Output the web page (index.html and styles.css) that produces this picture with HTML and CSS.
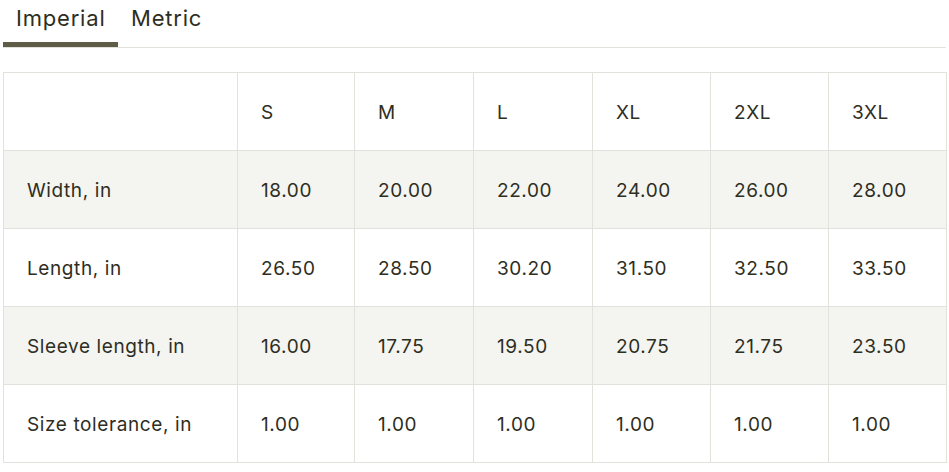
FILE: index.html
```html
<!DOCTYPE html>
<html>
<head>
<meta charset="utf-8">
<link rel="stylesheet" href="styles.css">
</head>
<body>
<div class="tabs">
  <div class="tab active">Imperial</div>
  <div class="tab">Metric</div>
</div>
<table class="sizes">
  <colgroup>
    <col class="c0"><col class="c1"><col class="c2"><col class="c3"><col class="c4"><col class="c5"><col class="c6">
  </colgroup>
  <tr><td></td><td>S</td><td>M</td><td>L</td><td>XL</td><td>2XL</td><td>3XL</td></tr>
  <tr class="alt"><td>Width, in</td><td>18.00</td><td>20.00</td><td>22.00</td><td>24.00</td><td>26.00</td><td>28.00</td></tr>
  <tr><td>Length, in</td><td>26.50</td><td>28.50</td><td>30.20</td><td>31.50</td><td>32.50</td><td>33.50</td></tr>
  <tr class="alt"><td>Sleeve length, in</td><td>16.00</td><td>17.75</td><td>19.50</td><td>20.75</td><td>21.75</td><td>23.50</td></tr>
  <tr><td>Size tolerance, in</td><td>1.00</td><td>1.00</td><td>1.00</td><td>1.00</td><td>1.00</td><td>1.00</td></tr>
</table>
</body>
</html>
```
FILE: styles.css
```css
html, body { margin: 0; padding: 0; background: #fff; }
body {
  font-family: "Inter", "Liberation Sans", sans-serif;
  color: #2e2e1f;
  padding: 0 3px;
}
.tabs {
  display: flex;
  border-bottom: 1px solid #e2e2dd;
  height: 47px;
}
.tab {
  font-size: 22px;
  letter-spacing: 0.8px;
  padding: 5px 13px 0 13px;
  line-height: 27px;
  box-sizing: border-box;
}
.tab.active {
  border-bottom: 5px solid #5f5d48;
  width: 115px;
}
.sizes {
  margin-top: 24px;
  border-collapse: collapse;
  table-layout: fixed;
  width: 943px;
  font-size: 19px;
  letter-spacing: 0.6px;
}
.sizes td {
  border: 1px solid #e2e2dd;
  height: 78px;
  padding: 2px 0 0 23px;
  box-sizing: border-box;
}
.sizes tr.alt td { background: #f4f4f0; }
.c0 { width: 234px; }
.c1 { width: 117px; }
.c2 { width: 119px; }
.c3 { width: 119px; }
.c4 { width: 118px; }
.c5 { width: 118px; }
.c6 { width: 118px; }
```
